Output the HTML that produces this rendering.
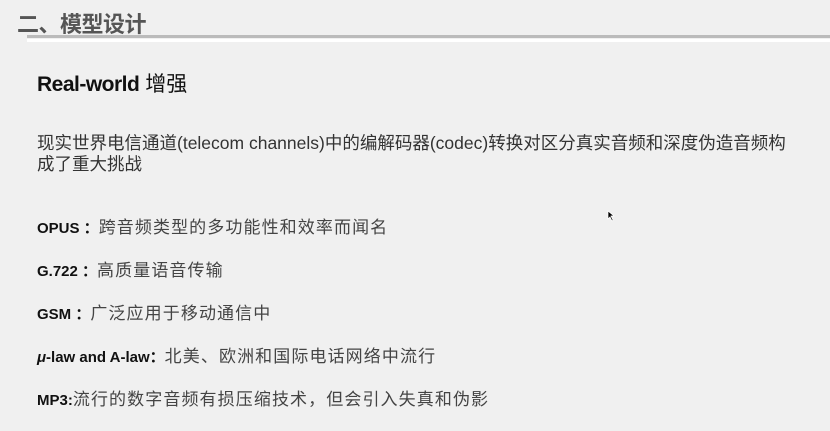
<!DOCTYPE html>
<html><head><meta charset="utf-8"><style>
body{margin:0;width:830px;height:431px;background:#f0f0f0;overflow:hidden;position:relative;font-family:"Liberation Sans","Noto Sans CJK SC",sans-serif;color:#222}
.t{position:absolute;white-space:nowrap}
.l{font-size:17px;color:#444;letter-spacing:1.1px}
.l b{color:#111;font-size:15px;letter-spacing:0}
</style></head><body>
<div class="t" style="left:17px;top:7px;font-size:22px;font-weight:bold;color:#555;letter-spacing:-0.5px">二、模型设计</div>
<div style="position:absolute;left:27px;top:35px;width:803px;height:3px;background:#bbb"></div>
<div style="position:absolute;left:27px;top:39px;width:803px;height:3px;background:#fff"></div>
<div class="t" style="left:37px;top:68px;font-size:21px;color:#111"><span style="font-weight:bold;letter-spacing:-0.5px">Real-world</span> 增强</div>
<div class="t" style="left:37px;top:133px;font-size:17.5px;line-height:21px;color:#333">现实世界电信通道(telecom channels)中的编解码器(codec)转换对区分真实音频和深度伪造音频构<br>成了重大挑战</div>
<div class="t l" style="left:37px;top:213px"><b>OPUS ：</b>跨音频类型的多功能性和效率而闻名</div>
<div class="t l" style="left:37px;top:256px"><b>G.722 ：</b>高质量语音传输</div>
<div class="t l" style="left:37px;top:299px"><b>GSM ：</b>广泛应用于移动通信中</div>
<div class="t l" style="left:37px;top:342px"><b><i>μ</i>-law and A-law：</b>北美、欧洲和国际电话网络中流行</div>
<div class="t l" style="left:37px;top:385px"><b>MP3:</b>流行的数字音频有损压缩技术，但会引入失真和伪影</div>
<svg style="position:absolute;left:607px;top:210px" width="8" height="12"><path d="M1 1 L1 9 L3 7 L5 11 L6 10 L4 6 L7 6 Z" fill="#000" stroke="#fff" stroke-width="0.7"/></svg>
</body></html>
